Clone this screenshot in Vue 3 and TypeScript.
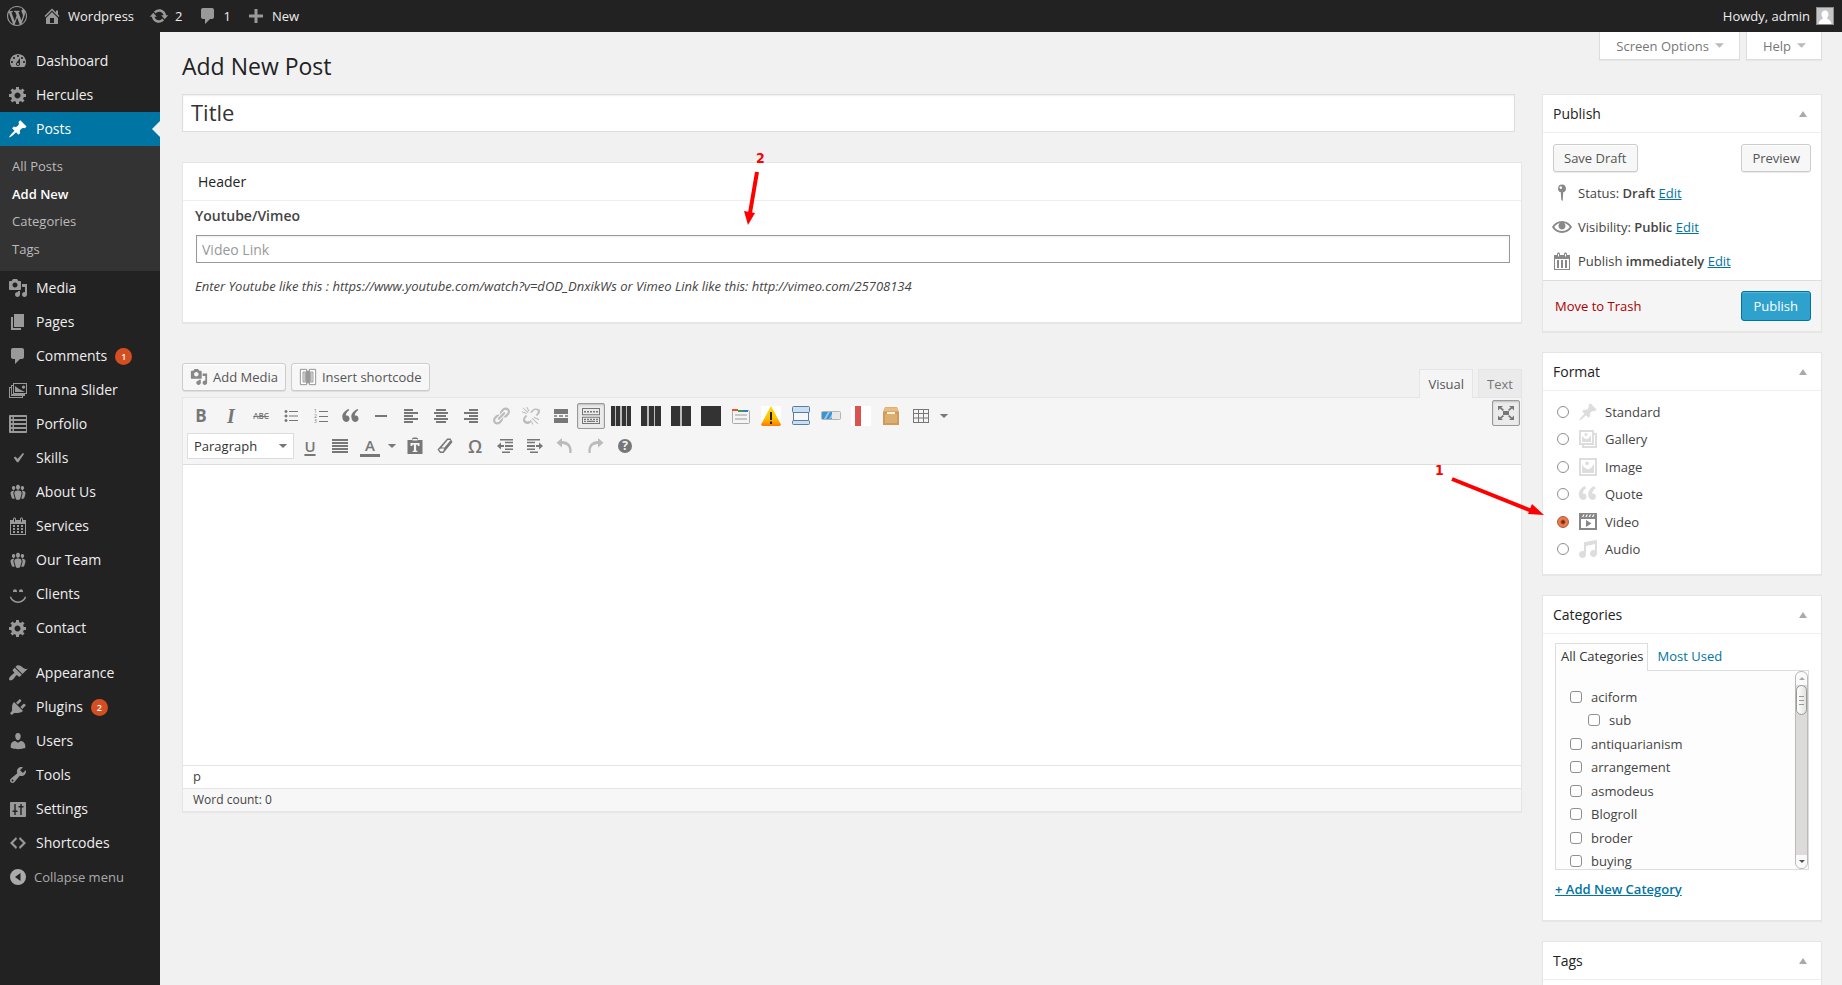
<script setup lang="ts">
import { h, ref } from 'vue'

const paths: Record<string, string> = {
  wordpress: 'M20 10c0-5.51-4.49-10-10-10C4.48 0 0 4.49 0 10c0 5.52 4.48 10 10 10 5.51 0 10-4.48 10-10zM7.78 15.37L4.37 6.22c.55-.02 1.17-.08 1.17-.08.5-.06.44-1.13-.06-1.11 0 0-1.45.11-2.37.11-.18 0-.37 0-.58-.01C4.12 2.69 6.87 1.11 10 1.11c2.33 0 4.45.87 6.05 2.34-.68-.11-1.65.39-1.65 1.58 0 .74.45 1.36.9 2.1.35.61.55 1.36.55 2.46 0 1.49-1.4 5-1.4 5l-3.03-8.37c.54-.02.82-.17.82-.17.5-.05.44-1.25-.06-1.22 0 0-1.44.12-2.38.12-.87 0-2.33-.12-2.33-.12-.5-.03-.56 1.2-.06 1.22l.92.08 1.26 3.41zM17.41 10c.24-.64.74-1.87.43-4.25.7 1.29 1.05 2.71 1.05 4.25 0 3.29-1.73 6.24-4.4 7.78.97-2.59 1.94-5.2 2.92-7.78zM6.1 18.09C3.12 16.65 1.11 13.53 1.11 10c0-1.3.23-2.48.72-3.59C3.25 10.3 4.67 14.2 6.1 18.09zm4.03-6.63l2.58 6.98c-.86.29-1.76.45-2.71.45-.79 0-1.57-.11-2.29-.33.81-2.38 1.62-4.74 2.42-7.1z',
  home: 'M16 8.5l1.53 1.53-1.06 1.06L10 4.6l-6.47 6.49-1.06-1.06L10 2.5l4 4v-2h2v4zm-6-2.46l6 5.99V18H4v-5.97zM12 17v-5H8v5h4z',
  update: 'M10.2 3.28c3.53 0 6.43 2.61 6.92 6h2.08l-3.5 4-3.5-4h2.32c-.45-1.97-2.21-3.45-4.32-3.45-1.45 0-2.73.71-3.54 1.78L4.95 5.66C6.23 4.2 8.11 3.28 10.2 3.28zm-.4 13.44c-3.52 0-6.43-2.61-6.92-6H.8l3.5-4c1.17 1.33 2.33 2.67 3.5 4H5.48c.45 1.97 2.21 3.45 4.32 3.45 1.45 0 2.73-.71 3.54-1.78l1.71 1.95c-1.28 1.46-3.15 2.38-5.25 2.38z',
  comment: 'M5 2h9c1.1 0 2 .9 2 2v7c0 1.1-.9 2-2 2h-2l-5 5v-5H5c-1.1 0-2-.9-2-2V4c0-1.1.9-2 2-2z',
  plus: 'M17 8.5v3h-5.5V17h-3v-5.5H3v-3h5.5V3h3v5.5z',
  dashboard: 'M3.76 16h12.48c1.1-1.37 1.76-3.11 1.76-5 0-4.42-3.58-8-8-8s-8 3.58-8 8c0 1.89.66 3.63 1.76 5zM10 4c.55 0 1 .45 1 1s-.45 1-1 1-1-.45-1-1 .45-1 1-1zM6 6c.55 0 1 .45 1 1s-.45 1-1 1-1-.45-1-1 .45-1 1-1zm8 0c.55 0 1 .45 1 1s-.45 1-1 1-1-.45-1-1 .45-1 1-1zm-5.37 5.55L12 7v6c0 1.1-.9 2-2 2s-2-.9-2-2c0-.57.24-1.08.63-1.45zM4 10c.55 0 1 .45 1 1s-.45 1-1 1-1-.45-1-1 .45-1 1-1zm12 0c.55 0 1 .45 1 1s-.45 1-1 1-1-.45-1-1 .45-1 1-1zm-5 3c0-.55-.45-1-1-1s-1 .45-1 1 .45 1 1 1 1-.45 1-1z',
  gear: 'M18 12h-2.18c-.17.7-.44 1.35-.81 1.93l1.54 1.54-2.1 2.1-1.54-1.54c-.58.36-1.23.63-1.91.79V19H8v-2.18c-.68-.16-1.33-.43-1.91-.79l-1.54 1.54-2.12-2.12 1.54-1.54c-.36-.58-.63-1.23-.79-1.91H1V9.03h2.17c.16-.7.44-1.35.8-1.94L2.43 5.55l2.1-2.1 1.54 1.54c.58-.37 1.24-.64 1.93-.81V2h3v2.18c.68.16 1.33.43 1.91.79l1.54-1.54 2.12 2.12-1.54 1.54c.36.59.64 1.24.8 1.94H18V12zm-8.5 1.5c1.66 0 3-1.34 3-3s-1.34-3-3-3-3 1.34-3 3 1.34 3 3 3z',
  pin: 'M10.44 3.02l1.82-1.82 6.36 6.35-1.83 1.82c-1.05-.68-2.48-.57-3.41.36l-.75.75c-.92.93-1.04 2.35-.35 3.41l-1.83 1.82-2.41-2.41-2.8 2.79c-.42.42-3.38 2.71-3.8 2.29s1.86-3.39 2.28-3.81l2.79-2.79L4.1 9.36l1.83-1.82c1.05.69 2.48.57 3.4-.36l.75-.75c.93-.92 1.05-2.35.36-3.41z',
  media: 'M13 11V4c0-.55-.45-1-1-1h-1.67L9 1H5L3.67 3H2c-.55 0-1 .45-1 1v7c0 .55.45 1 1 1h10c.55 0 1-.45 1-1zM7 4.5c1.38 0 2.5 1.12 2.5 2.5S8.38 9.5 7 9.5 4.5 8.38 4.5 7 5.62 4.5 7 4.5zM14 6h5v10.5c0 1.38-1.12 2.5-2.5 2.5S14 17.88 14 16.5s1.12-2.5 2.5-2.5c.17 0 .34.02.5.05V9h-3V6zm-4 8.05V13h2v3.5c0 1.38-1.12 2.5-2.5 2.5S7 17.88 7 16.5 8.12 14 9.5 14c.17 0 .34.02.5.05z',
  pages: 'M6 15V2h10v13H6zm-1 1h8v2H3V5h2v11z',
  slides: 'M5 3h14v11h-2v2h-2v2H1V7h2V5h2zM6 4v9h12V4zM4 6v8h12v1H3.9zM4 6v8.9h12V14H5V6zM2 8v9h12v-1H3V8zM7 12V6l4 3 2 1 4 2zM15.5 5.500a1.600 1.600 0 1 0 .01 0z',
  list: 'M2 1h16c.55 0 1 .45 1 1v16c0 .55-.45 1-1 1H2c-.55 0-1-.45-1-1V2c0-.55.45-1 1-1zM3 3v2h1.500V3zM6 3v2h12V3zM3 7v2h1.500V7zM6 7v2h12V7zM3 11v2h1.500v-2zM6 11v2h12v-2zM3 15v2h1.500v-2zM6 15v2h12v-2z',
  check: 'M14.83 4.89l1.34.94-5.81 8.38H9.02L5.78 9.67l1.34-1.25 2.57 2.4z',
  groups: 'M8.03 4.46c-.29 1.28.55 3.46 1.97 3.46 1.41 0 2.25-2.18 1.96-3.46-.22-.98-1.08-1.63-1.96-1.63-.89 0-1.74.65-1.97 1.63zm-4.13.9c-.25 1.08.47 2.93 1.67 2.93s1.92-1.85 1.67-2.93c-.19-.83-.92-1.39-1.67-1.39s-1.48.56-1.67 1.39zm8.86 0c-.25 1.08.47 2.93 1.66 2.93 1.2 0 1.92-1.85 1.67-2.93-.19-.83-.92-1.39-1.67-1.39-.74 0-1.47.56-1.66 1.39zm-.59 11.43l1.25-4.3C14.2 10 12.71 8.47 10 8.47c-2.72 0-4.21 1.53-3.44 4.02l1.26 4.3C8.05 17.51 9 18 10 18c.98 0 1.94-.49 2.17-1.21zm-6.1-7.63c-.49.67-.96 1.83-.42 3.59l1.12 3.79c-.34.2-.77.31-1.2.31-.85 0-1.65-.41-1.85-1.03l-1.07-3.65c-.65-2.11.61-3.4 2.92-3.4.27 0 .54.02.79.06-.1.1-.2.22-.29.33zm8.35-.39c2.31 0 3.58 1.29 2.92 3.4l-1.07 3.65c-.2.62-1 1.03-1.85 1.03-.43 0-.86-.11-1.2-.31l1.11-3.77c.55-1.78.08-2.94-.42-3.61-.08-.11-.18-.23-.28-.33.25-.04.51-.06.79-.06z',
  calendar: 'M15 4h3v15H2V4h3V3c0-.41.15-.76.44-1.06.29-.29.65-.44 1.06-.44s.77.15 1.06.44c.29.3.44.65.44 1.06v1h4V3c0-.41.15-.76.44-1.06.29-.29.65-.44 1.06-.44s.77.15 1.06.44c.29.3.44.65.44 1.06v1zM6 3v2.500c0 .14.05.26.15.36.09.09.21.14.35.14s.26-.05.35-.14c.1-.1.15-.22.15-.36V3c0-.14-.05-.26-.15-.35-.09-.1-.21-.15-.35-.15s-.26.05-.35.15c-.1.09-.15.21-.15.35zm7 0v2.500c0 .14.05.26.14.36.1.09.22.14.36.14s.26-.05.36-.14c.09-.1.14-.22.14-.36V3c0-.14-.05-.26-.14-.35-.1-.1-.22-.15-.36-.15s-.26.05-.36.15c-.09.09-.14.21-.14.35zm4 15V8H3v10h14zM7 9v2H5V9h2zm2 0h2v2H9V9zm4 2V9h2v2h-2zm-6 1v2H5v-2h2zm2 0h2v2H9v-2zm4 2v-2h2v2h-2zm-6 1v2H5v-2h2zm4 2H9v-2h2v2zm4 0h-2v-2h2v2z',
  schedule: 'M15 4h3v15H2V4h3V3c0-.41.15-.76.44-1.06.29-.29.65-.44 1.06-.44s.77.15 1.06.44c.29.3.44.65.44 1.06v1h4V3c0-.41.15-.76.44-1.06.29-.29.65-.44 1.06-.44s.77.15 1.06.44c.29.3.44.65.44 1.06v1zM6 3v2.500h1V3zM13 3v2.500h1V3zM17 18V8H3v10zM5 9h2v8H5zM9 9h2v8H9zM13 9h2v8h-2z',
  smiley: 'M7 5.2c1.1 0 2 .89 2 2 0 .37-.11.71-.28 1C8.72 8.2 8 8 7 8s-1.72.2-1.72.2c-.17-.29-.28-.63-.28-1 0-1.11.9-2 2-2zm6 0c1.11 0 2 .89 2 2 0 .37-.11.71-.28 1 0 0-.72-.2-1.72-.2s-1.72.2-1.72.2c-.17-.29-.28-.63-.28-1 0-1.11.89-2 2-2zm-3 13.700c3.720 0 7.030-2.360 8.230-5.880l-1.320-.46C15.900 15.520 13.120 17.500 10 17.500s-5.900-1.980-6.910-4.940l-1.320.46c1.200 3.520 4.510 5.880 8.230 5.880z',
  appearance: 'M14.48 11.06L7.41 3.99l1.5-1.5c.5-.56 2.3-.47 3.51.32 1.21.8 1.43 1.28 2.91 2.1 1.18.64 2.45 1.26 4.45.85zm-.71.71L6.7 4.7 4.93 6.47c-.39.39-.39 1.02 0 1.41l1.06 1.06c.39.39.39 1.03 0 1.42-.6.6-1.43 1.11-2.21 1.69-.35.26-.7.53-1.01.84C1.43 14.23.4 16.08 1.4 17.07c.99 1 2.84-.03 4.18-1.36.31-.31.58-.66.85-1.02.57-.78 1.08-1.61 1.69-2.21.39-.39 1.02-.39 1.41 0l1.06 1.06c.39.39 1.02.39 1.41 0z',
  plugins: 'M13.11 4.36L9.87 7.6 8 5.73l3.24-3.24c.35-.34 1.05-.2 1.56.32.52.51.66 1.21.31 1.55zm-8 1.77l.91-1.12 9.01 9.01-1.19.84c-.71.71-2.63 1.16-3.82 1.16H6.14L4.9 17.26c-.59.59-1.54.59-2.12 0-.59-.58-.59-1.53 0-2.12l1.24-1.24v-3.88c0-1.13.4-3.19 1.09-3.89zm7.26 3.97l3.24-3.24c.34-.35 1.04-.21 1.55.31.52.51.66 1.21.31 1.55l-3.24 3.25z',
  users: 'M10 9.25c-2.27 0-2.73-3.44-2.73-3.44C7 4.02 7.82 2 9.97 2c2.16 0 2.98 2.02 2.71 3.81 0 0-.41 3.44-2.68 3.44zm0 2.57L12.72 10c2.39 0 4.52 2.33 4.52 4.53v2.49s-3.65 1.13-7.24 1.13c-3.65 0-7.24-1.13-7.24-1.13v-2.49c0-2.25 1.94-4.48 4.47-4.48z',
  tools: 'M16.68 9.77c-1.34 1.34-3.3 1.67-4.95.99l-5.41 6.52c-.99.99-2.59.99-3.58 0s-.99-2.59 0-3.57l6.52-5.42c-.68-1.65-.35-3.61.99-4.95 1.28-1.28 3.12-1.62 4.72-1.06l-2.89 2.89 2.82 2.82 2.86-2.87c.53 1.58.18 3.39-1.08 4.65zM3.81 16.21c.4.39 1.04.39 1.43 0 .4-.4.4-1.04 0-1.43-.39-.4-1.03-.4-1.43 0-.39.39-.39 1.03 0 1.43z',
  settings: 'M3 3h14c.55 0 1 .45 1 1v13c0 .55-.45 1-1 1H3c-.55 0-1-.45-1-1V4c0-.55.45-1 1-1zM6.300 5v6.500H4.500V13H6.300v3h1.400v-3H9.500v-1.500H7.700V5zM12.300 5v2H10.500v1.500h1.800V16h1.400V8.500h1.800V7h-1.800V5z',
  code: 'M9 6l-4 4 4 4-1 2-6-6 6-6zm2 8l4-4-4-4 1-2 6 6-6 6z',
  collapse: 'M10 2a8 8 0 1 0 0 16a8 8 0 1 0 0-16zM12.500 6v8L7 10z',
  quote: 'M8.540 12.740c0-.870-.240-1.610-.720-2.220-.730-.920-2.140-1.030-2.960-.850-.340-1.930 1.300-4.390 3.420-5.450L7.650 2.940C4.450 4.460.810 6.960 1.350 11.370 1.690 14.160 2.800 16 5.080 16c1 0 1.830-.290 2.480-.880.660-.590.980-1.380.980-2.380zm9 0c0-.870-.240-1.610-.720-2.220-.730-.920-2.140-1.030-2.960-.850-.340-1.930 1.300-4.390 3.420-5.450l-.630-1.280c-3.200 1.520-6.840 4.020-6.300 8.430.340 2.790 1.450 4.630 3.730 4.630 1 0 1.830-.290 2.480-.880.660-.590.980-1.380.980-2.380z',
  bigquote: 'M8.540 12.740c0-.870-.240-1.610-.720-2.220-.730-.920-2.140-1.030-2.960-.850-.340-1.930 1.300-4.390 3.420-5.450L6.650 1.940C3.450 3.460.310 6.960.850 11.370 1.190 14.160 2.800 16 5.080 16c1 0 1.830-.290 2.480-.880.660-.590.980-1.380.980-2.380zm9.430 0c0-.870-.240-1.610-.720-2.220-.730-.920-2.140-1.030-2.960-.850-.340-1.930 1.300-4.390 3.420-5.450l-1.630-2.280c-3.200 1.520-6.340 5.020-5.800 9.430.340 2.790 1.950 4.630 4.230 4.630 1 0 1.830-.290 2.480-.880.660-.590.980-1.380.980-2.380z',
  audio: 'M6.99 3.08l11.02-2c.55-.08.99.45.99 1V14.5c0 1.94-1.57 3.5-3.5 3.5S12 16.44 12 14.5c0-1.93 1.57-3.5 3.5-3.5.54 0 1.04.14 1.5.35V5.08l-9 2V16c-.24 1.7-1.74 3-3.5 3C2.57 19 1 17.44 1 15.5 1 13.57 2.57 12 4.5 12c.54 0 1.04.14 1.5.35V4.08c0-.55.44-.91.99-1z',
  image: 'M1 1h18v18H1zM3 3v14h14V3zM4 16V8l3 3 3 1.500L13 11l3-4v9zM9 4.500a1.900 1.900 0 1 0 .01 0z',
  gallery: 'M1 1h15v3h3v15H4v-3H1zM3 3v11h11V3zM4 13V7l2.500 2.500 3 .8L13 6.500V13zM8 4a1.500 1.500 0 1 0 .01 0zM16 6v10H6v1h11V6z',
  video: 'M1 1h18v17H1zM3 7v9h14V7zM8 8l5.500 3.500L8 15zM5.300 2.500L4 5h1.300L6.600 2.500zM8.600 2.500L7.300 5h1.300L9.900 2.500zM11.900 2.500L10.600 5h1.300l1.300-2.500zM15.200 2.500L13.900 5h1.300l1.300-2.500z',
  eye: 'M19.7 9.4C17.7 6 14 3.9 10 3.9S2.3 6 .3 9.4L0 10l.3.6c2 3.4 5.7 5.5 9.7 5.5s7.7-2.1 9.7-5.5l.3-.6-.3-.6zM10 14.1c-3.1 0-6-1.6-7.7-4.1C3.6 8 5.7 6.6 8 6.1c-.9.6-1.500 1.700-1.500 2.900 0 1.900 1.600 3.500 3.500 3.500s3.500-1.600 3.500-3.500c0-1.200-.6-2.300-1.500-2.900 2.300.5 4.400 1.900 5.700 3.900-1.700 2.500-4.600 4.100-7.700 4.100z',
  status: 'M10 1.500a4 4 0 0 1 1.200 7.800L10.700 18 9.300 17 8.800 9.300A4 4 0 0 1 10 1.500zM8.800 3.300a1.300 1.300 0 1 0 .01 0z',
  bullets: 'M5 4a1.500 1.500 0 1 0 .01 0zM5 8.500a1.500 1.500 0 1 0 .01 0zM5 13a1.500 1.500 0 1 0 .01 0zM8 5h9v1H8zM8 9.500h9v1H8zM8 14h9v1H8z',
  rule: 'M4 9h12v2H4z',
  left: 'M3 3h9v2H3zM3 6h14v2H3zM3 9h9v2H3zM3 12h14v2H3zM3 15h9v2H3z',
  center: 'M5 3h10v2H5zM3 6h14v2H3zM5 9h10v2H5zM3 12h14v2H3zM5 15h10v2H5z',
  right: 'M8 3h9v2H8zM3 6h14v2H3zM8 9h9v2H8zM3 12h14v2H3zM8 15h9v2H8z',
  justify: 'M2 3h16v2H2zM2 6h16v2H2zM2 9h16v2H2zM2 12h16v2H2zM2 15h16v2H2z',
  link: 'M17.74 2.76c1.68 1.69 1.68 4.41 0 6.1l-1.53 1.52c-1.12 1.12-2.7 1.47-4.14 1.09l2.62-2.61.76-.77.76-.76c.84-.84.84-2.2 0-3.04-.84-.85-2.2-.85-3.04 0l-.77.76-3.38 3.38c-.37-1.44-.02-3.02 1.1-4.14l1.52-1.53c1.69-1.68 4.42-1.68 6.1 0zM8.59 13.43l5.34-5.34c.42-.42.42-1.1 0-1.52-.44-.43-1.13-.39-1.53 0l-5.33 5.34c-.42.42-.42 1.1 0 1.52.44.43 1.13.39 1.52 0zm-.76 2.29l4.14-4.15c.38 1.44.03 3.02-1.09 4.14l-1.52 1.53c-1.69 1.68-4.41 1.68-6.1 0-1.68-1.68-1.68-4.42 0-6.1l1.53-1.52c1.12-1.12 2.7-1.47 4.14-1.1l-4.14 4.15c-.85.84-.85 2.2 0 3.05.84.84 2.2.84 3.04 0z',
  unlink: 'M17.740 2.260c1.680 1.690 1.680 4.410 0 6.100l-1.530 1.520-1.500-.7 1.500-1.850c.840-.840.840-2.200 0-3.040-.840-.850-2.200-.850-3.040 0l-2.700 2.700-1.400-.7 2.570-2.500c1.690-1.680 4.420-1.680 6.100 0zM7.830 15.720l2.100-2 1.400 1-1.970 2.020c-1.690 1.680-4.410 1.680-6.100 0-1.680-1.680-1.680-4.420 0-6.100l1.530-1.520 1.500.8-1.550 1.800c-.850.840-.850 2.200 0 3.050.840.840 2.200.840 3.040 0zM2 1.500l5.500 4.700-.8.800L1.500 2zM6.200 1l2.300 4-1 .5L5.200 1zM1 5.300l4.800 1.600-.4 1L1 6.300zM11.500 12l5.800 5.500-.6.700-5.800-5.500zM10.300 13.500l2 5h-1.200l-1.600-4.700zM13 10.800l5 2.300v1.200l-5.300-2.500z',
  more: 'M3 3h14v5H3zM3 9.200h3v1.600H3zM8 9.200h4v1.600H8zM14 9.200h3v1.600h-3zM3 12h14v5H3z',
  keyboard: 'M1 2h18v7.300H1zM2 3v5.300h16V3zM3 5h2v1.500H3zM6 5h2v1.500H6zM9 5h2v1.500H9zM12 5h2v1.500h-2zM15 5h2v1.500h-2zM1 10.700h18V18H1zM2 11.700V17h16v-5.300zM3 12.700h2V14H3zM6 12.700h2V14H6zM9 12.700h2V14H9zM12 12.700h2V14h-2zM15 12.700h2V14h-2zM3 14.700h2V16H3zM6 14.700h8V16H6zM15 14.700h2V16h-2z',
  paste: 'M7 4V2.500L8.500 1.500h3L13 2.500V4h4.500v14h-15V4zM7.500 3v1.500h5V3zM5.500 7v3h1.800V8.800h1.600v6H7.700V16h4.600v-1.200h-1.200v-6h1.600V10h1.800V7z',
  eraser: 'M12.200 2.500h3.300L17.500 6 8.500 17H5L2.500 13.500zM12.800 4L6.500 11.500h3L15.500 4.300 15.200 4zM6 12.600L4 13.600 5.700 15.600H8L9.300 12.600z',
  outdent: 'M5 3h13v1.500H5zM10 5.800h8v1.500h-8zM10 9h8v2h-8zM10 12.500h8V14h-8zM7 15.500h8V17H7zM2 10l4-3.500v2.500h3v2H6v2.500z',
  indent: 'M2 3h13v1.500H2zM2 5.800h8v1.500H2zM2 9h8v2H2zM2 12.500h8V14H2zM5 15.500h8V17H5zM18 10l-4-3.500v2.500h-3v2h3v2.500z',
  undo: 'M7 2v3c6 0 10.500 4 9.500 12h-2.300C15 11 12 8.200 7 8v3.500L1.500 6.800z',
  redo: 'M13 2v3C7 5 2.500 9 3.500 17h2.300C5 11 8 8.200 13 8v3.500l5.500-4.700z',
  table: 'M2 3h16v14H2zM3 4v3h4V4zM8 4v3h4V4zM13 4v3h4V4zM3 8v3.500h4V8zM8 8v3.500h4V8zM13 8v3.500h4V8zM3 12.500V16h4v-3.500zM8 12.500V16h4v-3.500zM13 12.500V16h4v-3.500z',
  expand: 'M7 8h6v4H7zM2 3h5L5.300 4.500 8 6.800 6.800 8 4 5.600 2 7.500zM18 3v4.500L16 5.600 13.200 8 12 6.800l2.700-2.300L13 3zM2 17v-4.500l2 1.900L6.800 12 8 13.200l-2.700 2.300L7 17zM18 17h-5l1.700-1.500L12 13.200l1.200-1.200 2.800 2.400 2-1.900z',
  down: 'M4 7h12l-6 6z',
}

const Icon = (props: { name: string }) =>
  h('svg', { class: 'icon', viewBox: '0 0 20 20', 'aria-hidden': 'true' }, [
    h('path', { d: paths[props.name], 'fill-rule': 'evenodd' }),
  ])
Icon.props = ['name']

interface MenuItem { label: string; icon: string; count?: number; sub?: string[]; gap?: boolean }
const menu: MenuItem[] = [
  { label: 'Dashboard', icon: 'dashboard' },
  { label: 'Hercules', icon: 'gear' },
  { label: 'Posts', icon: 'pin', sub: ['All Posts', 'Add New', 'Categories', 'Tags'] },
  { label: 'Media', icon: 'media' },
  { label: 'Pages', icon: 'pages' },
  { label: 'Comments', icon: 'comment', count: 1 },
  { label: 'Tunna Slider', icon: 'slides' },
  { label: 'Porfolio', icon: 'list' },
  { label: 'Skills', icon: 'check' },
  { label: 'About Us', icon: 'groups' },
  { label: 'Services', icon: 'calendar' },
  { label: 'Our Team', icon: 'groups' },
  { label: 'Clients', icon: 'smiley' },
  { label: 'Contact', icon: 'gear' },
  { label: 'Appearance', icon: 'appearance', gap: true },
  { label: 'Plugins', icon: 'plugins', count: 2 },
  { label: 'Users', icon: 'users' },
  { label: 'Tools', icon: 'tools' },
  { label: 'Settings', icon: 'settings' },
  { label: 'Shortcodes', icon: 'code' },
]

const formats = [
  { label: 'Standard', icon: 'pin' },
  { label: 'Gallery', icon: 'gallery' },
  { label: 'Image', icon: 'image' },
  { label: 'Quote', icon: 'bigquote' },
  { label: 'Video', icon: 'video' },
  { label: 'Audio', icon: 'audio' },
]
const format = ref('Video')

const categories = [
  { label: 'aciform' }, { label: 'sub', child: true }, { label: 'antiquarianism' }, { label: 'arrangement' },
  { label: 'asmodeus' }, { label: 'Blogroll' }, { label: 'broder' }, { label: 'buying' },
]
const chosen = ref<string[]>([])
const title = ref('Title')
const video = ref('')
const body = ref('')

const firstRow = [
  { icon: 'quote', label: 'Blockquote' }, { icon: 'rule', label: 'Horizontal line' },
  { icon: 'left', label: 'Align left' }, { icon: 'center', label: 'Align center' }, { icon: 'right', label: 'Align right' },
  { icon: 'link', label: 'Insert link', off: true }, { icon: 'unlink', label: 'Remove link', off: true },
  { icon: 'more', label: 'Insert Read More tag' }, { icon: 'keyboard', label: 'Toolbar Toggle', on: true },
]
const columns = [
  { label: 'Four columns', bars: [[0, 4], [5, 4], [11, 4], [16, 4]] },
  { label: 'Three columns', bars: [[0, 6], [8, 5], [14, 6]] },
  { label: 'Two columns', bars: [[0, 9], [11, 9]] },
  { label: 'One column', bars: [[0, 20]] },
]
</script>

<template>
  <div class="app">
    <header class="adminbar">
      <a href="#" aria-label="About WordPress"><Icon name="wordpress" /></a>
      <a href="#"><Icon name="home" />Wordpress</a>
      <a href="#"><Icon name="update" />2</a>
      <a href="#"><Icon name="comment" />1</a>
      <a href="#"><Icon name="plus" />New</a>
      <a href="#" class="account">Howdy, admin
        <svg class="avatar" viewBox="0 0 18 18" aria-hidden="true">
          <rect width="18" height="18" fill="#8c8c8c" /><rect x="1" y="1" width="16" height="16" fill="#c5c5c5" />
          <path d="M9 3.500c2.500 0 3.500 1.800 3.500 3.800 0 1.700-.8 3-1.600 3.700.6 1.500 4.100 1.500 4.600 6h-13c.5-4.500 4-4.500 4.600-6-.8-.7-1.600-2-1.600-3.700 0-2 1-3.800 3.500-3.800z" fill="#fff" />
        </svg>
      </a>
    </header>

    <div class="shell">
      <nav class="sidebar" aria-label="Main menu">
        <ul>
          <li v-for="item in menu" :key="item.label" :class="{ current: item.sub, gap: item.gap }">
            <a href="#" class="top"><Icon :name="item.icon" /><span>{{ item.label }}</span>
              <b v-if="item.count" class="count">{{ item.count }}</b></a>
            <ul v-if="item.sub" class="sub">
              <li v-for="s in item.sub" :key="s"><a href="#" :class="{ here: s === 'Add New' }">{{ s }}</a></li>
            </ul>
          </li>
        </ul>
        <button type="button" class="collapse"><Icon name="collapse" />Collapse menu</button>
      </nav>

      <main>
        <div class="heading">
          <h1>Add New Post</h1>
          <button type="button" class="meta-tab">Screen Options<Icon name="down" /></button>
          <button type="button" class="meta-tab">Help<Icon name="down" /></button>
        </div>

        <div class="columns">
          <div class="primary">
            <input v-model="title" class="title" type="text" aria-label="Title">

            <section class="box header-box">
              <h2>Header</h2>
              <label for="video">Youtube/Vimeo</label>
              <input id="video" v-model="video" type="text" placeholder="Video Link">
              <p>Enter Youtube like this : https://www.youtube.com/watch?v=dOD_DnxikWs or Vimeo Link like this: http://vimeo.com/25708134</p>
              <div class="note note-two">
                <span>2</span>
                <svg viewBox="0 0 20 60" aria-hidden="true"><path d="M14 3L7 44" stroke="#f00" stroke-width="4" fill="none" /><path d="M1 42l11 2-7 12z" fill="#f00" /></svg>
              </div>
            </section>

            <div class="tools">
              <button type="button" class="button"><Icon name="media" />Add Media</button>
              <button type="button" class="button">
                <svg class="icon" viewBox="0 0 20 20" aria-hidden="true">
                  <g fill="#fff" stroke="#8a8a8a"><path d="M8.500 1.500h-7v17h7v-3h-4v-11h4zM11.500 1.500h7v17h-7v-3h4v-11h-4z" /></g>
                  <rect x="6" y="5" width="8" height="10" fill="#aaa" /><rect x="8" y="3" width="4" height="14" fill="#999" />
                </svg>Insert shortcode</button>
              <span class="tabs">
                <button type="button" class="tab active">Visual</button>
                <button type="button" class="tab">Text</button>
              </span>
            </div>

            <section class="editor">
              <div class="toolbar">
                <div class="rows">
                  <div class="row">
                    <button type="button" class="glyph bold">B</button>
                    <button type="button" class="glyph italic">I</button>
                    <button type="button" class="glyph strike">ABC</button>
                    <button type="button" aria-label="Bulleted list"><Icon name="bullets" /></button>
                    <button type="button" aria-label="Numbered list">
                      <svg class="icon" viewBox="0 0 20 20" aria-hidden="true">
                        <g class="digits"><text x="3" y="7">1</text><text x="3" y="12">2</text><text x="3" y="17">3</text></g>
                        <path d="M8 5h9v1H8zM8 10h9v1H8zM8 15h9v1H8z" />
                      </svg>
                    </button>
                    <button v-for="b in firstRow" :key="b.icon" type="button" :aria-label="b.label" :class="{ off: b.off, on: b.on }"><Icon :name="b.icon" /></button>
                    <button v-for="c in columns" :key="c.label" type="button" :aria-label="c.label">
                      <svg class="icon" viewBox="0 0 20 20" aria-hidden="true">
                        <rect width="20" height="20" fill="#bbb" />
                        <rect v-for="b in c.bars" :key="b[0]" :x="b[0]" :width="b[1]" height="20" fill="#333" />
                      </svg>
                    </button>
                    <button type="button" aria-label="Tabs">
                      <svg class="icon" viewBox="0 0 20 20" aria-hidden="true">
                        <rect x="1.500" y="4.500" width="17" height="13" rx="1" fill="#f4f4f4" stroke="#aaa" />
                        <rect x="1" y="3" width="6" height="2" fill="#f0512d" /><rect x="7" y="4" width="5" height="2" fill="#3b9d46" /><rect x="12" y="4" width="5" height="2" fill="#3478c8" />
                        <path d="M4 9h12M4 13h12" stroke="#999" />
                      </svg>
                    </button>
                    <button type="button" aria-label="Alert">
                      <svg class="icon" viewBox="0 0 20 20" aria-hidden="true">
                        <defs><linearGradient id="warn" x2="0" y2="1"><stop offset="0" stop-color="#ffd800" /><stop offset=".6" stop-color="#ffc400" /><stop offset="1" stop-color="#ff7a00" /></linearGradient></defs>
                        <rect width="20" height="20" fill="#fff" /><path d="M10 0L20 18.500 19 20H1L0 18.500z" fill="url(#warn)" /><path d="M9 6h2v8H9zM9 15.500h2V18H9z" fill="#222" />
                      </svg>
                    </button>
                    <button type="button" aria-label="Accordion">
                      <svg class="icon" viewBox="0 0 20 20" aria-hidden="true">
                        <g stroke="#5d7c9d"><rect x="1.500" y=".5" width="17" height="6" rx="1" fill="#c9dff2" /><rect x="2.500" y="6.500" width="15" height="8" fill="#f5f8fb" /><rect x="1.500" y="14.500" width="17" height="4" rx="1" fill="#c9dff2" /></g>
                      </svg>
                    </button>
                    <button type="button" aria-label="Progress bar">
                      <svg class="icon" viewBox="0 0 20 20" aria-hidden="true">
                        <rect x=".5" y="5.500" width="19" height="8" rx="1" fill="#e8e8e8" stroke="#b5b5b5" /><rect x="1" y="6" width="10" height="7" fill="#3f94d0" /><path d="M3 13l4-7h2l-4 7zM8 13l3-5v4z" fill="#9acbed" />
                      </svg>
                    </button>
                    <button type="button" aria-label="Divider">
                      <svg class="icon" viewBox="0 0 20 20" aria-hidden="true"><rect width="20" height="20" fill="#fff" /><rect x="4" width="6" height="20" fill="#d9534f" /></svg>
                    </button>
                    <button type="button" aria-label="Box">
                      <svg class="icon" viewBox="0 0 20 20" aria-hidden="true">
                        <path d="M4 1h12l2 5v13H2V6z" fill="#dba967" /><path d="M2 6h16v13H2z" fill="#d09a58" /><path d="M4 1.500h12L17 5H3z" fill="#e6bd84" /><rect x="4" y="8" width="12" height="9" fill="#dcae70" /><rect x="6" y="6" width="8" height="2" fill="#fff3d8" />
                      </svg>
                    </button>
                    <span class="split">
                      <button type="button" aria-label="Table"><Icon name="table" /></button>
                      <button type="button" class="caret" aria-label="Table options"><Icon name="down" /></button>
                    </span>
                  </div>
                  <div class="row">
                    <span class="picker">
                      <select aria-label="Paragraph style"><option>Paragraph</option><option>Heading 1</option></select>
                      <Icon name="down" />
                    </span>
                    <button type="button" class="glyph under">U</button>
                    <button type="button" aria-label="Justify"><Icon name="justify" /></button>
                    <span class="split">
                      <button type="button" class="glyph colour"><span>A</span></button>
                      <button type="button" class="caret" aria-label="Text color options"><Icon name="down" /></button>
                    </span>
                    <button type="button" aria-label="Paste as text"><Icon name="paste" /></button>
                    <button type="button" aria-label="Clear formatting"><Icon name="eraser" /></button>
                    <button type="button" class="glyph omega">Ω</button>
                    <button type="button" aria-label="Decrease indent"><Icon name="outdent" /></button>
                    <button type="button" aria-label="Increase indent"><Icon name="indent" /></button>
                    <button type="button" class="off" aria-label="Undo"><Icon name="undo" /></button>
                    <button type="button" class="off" aria-label="Redo"><Icon name="redo" /></button>
                    <button type="button" class="help"><span>?</span></button>
                  </div>
                </div>
                <button type="button" class="on expand" aria-label="Distraction Free Writing"><Icon name="expand" /></button>
              </div>
              <textarea v-model="body" aria-label="Post content"></textarea>
              <div class="path">p</div>
              <div class="words">Word count: 0</div>
            </section>
          </div>

          <aside>
            <section class="box">
              <h2>Publish<button type="button" class="toggle" aria-label="Toggle Publish"></button></h2>
              <div class="publish">
                <div class="pair"><button type="button" class="button">Save Draft</button><button type="button" class="button">Preview</button></div>
                <div class="fact"><Icon name="status" /><span>Status: <b>Draft</b> <a href="#">Edit</a></span></div>
                <div class="fact"><Icon name="eye" /><span>Visibility: <b>Public</b> <a href="#">Edit</a></span></div>
                <div class="fact"><Icon name="schedule" /><span>Publish <b>immediately</b> <a href="#">Edit</a></span></div>
              </div>
              <div class="actions"><a href="#">Move to Trash</a><button type="button" class="submit">Publish</button></div>
            </section>

            <section class="box format-box">
              <h2>Format<button type="button" class="toggle" aria-label="Toggle Format"></button></h2>
              <div class="formats">
                <label v-for="f in formats" :key="f.label" :class="{ picked: f.label === format }">
                  <input v-model="format" type="radio" name="format" :value="f.label"><Icon :name="f.icon" />{{ f.label }}
                </label>
              </div>
              <div class="note note-one">
                <span>1</span>
                <svg viewBox="0 0 96 44" aria-hidden="true"><path d="M2 4L82 36" stroke="#f00" stroke-width="4" fill="none" /><path d="M82 29l12 11-16-1z" fill="#f00" /></svg>
              </div>
            </section>

            <section class="box">
              <h2>Categories<button type="button" class="toggle" aria-label="Toggle Categories"></button></h2>
              <div class="cats">
                <div class="cat-tabs"><a href="#" class="active">All Categories</a><a href="#">Most Used</a></div>
                <div class="panel">
                  <div class="cat-list">
                    <label v-for="c in categories" :key="c.label" :class="{ child: c.child }"><input v-model="chosen" type="checkbox" :value="c.label">{{ c.label }}</label>
                  </div>
                  <div class="scroll" aria-hidden="true"><i class="up"></i><i class="thumb"></i><i class="groove"></i><i class="dn"></i></div>
                </div>
                <a href="#" class="add">+ Add New Category</a>
              </div>
            </section>

            <section class="box tags">
              <h2>Tags<button type="button" class="toggle" aria-label="Toggle Tags"></button></h2>
            </section>
          </aside>
        </div>
      </main>
    </div>
  </div>
</template>

<style>
body { margin: 0; background: #f1f1f1; }
</style>

<style scoped>
* { box-sizing: border-box; }
.app { height: 100vh; overflow: hidden; display: flex; flex-direction: column; background: #f1f1f1; color: #444; font: 13px/20px "Open Sans", sans-serif; }
button, input, select, textarea { font: inherit; color: inherit; margin: 0; outline: 0; }
button { padding: 0; border: 0; background: none; cursor: pointer; }
ul { list-style: none; margin: 0; padding: 0; }
a { color: #0074a2; }
b { font-weight: 600; }
.icon { width: 20px; height: 20px; flex: none; fill: currentColor; display: block; }

.adminbar { display: flex; align-items: center; gap: 15px; height: 32px; flex: none; padding: 0 8px 0 7px; background: #222; }
.adminbar a { display: flex; align-items: center; gap: 6px; color: #eee; text-decoration: none; }
.adminbar .icon { color: #999; }
.adminbar .account { margin-left: auto; }
.avatar { width: 18px; height: 18px; }

.shell { display: flex; flex: 1; min-height: 0; }
.sidebar { width: 160px; flex: none; padding-top: 12px; background: #222; }
.top { display: flex; align-items: center; gap: 8px; height: 34px; padding-left: 8px; color: #eee; font-size: 14px; text-decoration: none; }
.top .icon { color: #999; }
.gap { margin-top: 11px; }
.current .top { position: relative; background: #0074a2; color: #fff; }
.current .top .icon { color: #fff; }
.current .top::after { content: ""; position: absolute; right: 0; top: 9px; border: 8px solid transparent; border-left: 0; border-right-color: #f1f1f1; }
.count { display: grid; place-items: center; width: 17px; height: 17px; border-radius: 50%; background: #d54e21; color: #fff; font-size: 9px; line-height: 17px; }
.sub { display: grid; grid-template-rows: repeat(4, 1fr); height: 125px; padding: 6px 0 8px; background: #333; }
.sub a { display: flex; align-items: center; height: 100%; padding-left: 12px; color: #bbb; text-decoration: none; }
.sub .here { color: #fff; font-weight: 600; }
.collapse { display: flex; align-items: center; gap: 6px; height: 34px; padding-left: 8px; color: #aaa; }

main { flex: 1; min-width: 0; padding: 0 20px 0 22px; }
.heading { display: flex; align-items: flex-start; gap: 6px; height: 62px; }
h1 { flex: 1; margin: 0; padding-top: 20px; color: #222; font-size: 23px; font-weight: 400; line-height: 28px; }
.meta-tab { display: flex; align-items: center; gap: 3px; height: 28px; padding: 0 12px 0 16px; border: 1px solid #ddd; border-top: 0; background: #fff; color: #777; box-shadow: 0 1px 1px rgba(0, 0, 0, .04); }
.meta-tab .icon { color: #bbb; width: 15px; height: 15px; }
.columns { display: flex; align-items: flex-start; gap: 20px; }
.primary { flex: 1; min-width: 0; }
aside { width: 280px; flex: none; display: flex; flex-direction: column; gap: 20px; }

.title { display: block; width: calc(100% - 7px); height: 38px; padding: 2px 8px 4px; border: 1px solid #ddd; background: #fff; color: #333; font-size: 22px; box-shadow: inset 0 1px 2px rgba(0, 0, 0, .07); }
.box { position: relative; border: 1px solid #e5e5e5; background: #fff; box-shadow: 0 1px 1px rgba(0, 0, 0, .04); }
h2 { display: flex; align-items: center; justify-content: space-between; height: 38px; margin: 0; padding: 0 10px; border-bottom: 1px solid #eee; color: #222; font-size: 14px; font-weight: 400; line-height: 20px; }
.toggle { width: 16px; height: 20px; display: grid; place-items: center; }
.toggle::before { content: ""; border: 4px solid transparent; border-top: 0; border-bottom: 6px solid #aaa; }

.header-box { margin-top: 30px; padding-bottom: 26px; }
.header-box h2 { padding-left: 15px; }
.header-box label { display: block; padding: 5px 12px 9px; font-size: 14px; font-weight: 600; }
.header-box input { display: block; width: calc(100% - 24px); height: 28px; margin-left: 13px; padding: 0 5px; border: 1px solid #999; background: #fff; font-size: 14px; box-shadow: inset 0 1px 2px rgba(0, 0, 0, .07); }
.header-box input::placeholder { color: #999; opacity: 1; }
.header-box p { margin: 13px 12px 0; font-style: italic; }

.note { position: absolute; color: #f00; font: bold 14px/14px "DejaVu Sans Condensed", "DejaVu Sans", sans-serif; pointer-events: none; }
.note span, .note svg { display: block; }
.note-two { left: 560px; top: -12px; }
.note-two span { padding-left: 13px; }
.note-two svg { width: 20px; height: 60px; margin-top: 4px; }
.note-one { left: -108px; top: 110px; }
.note-one svg { width: 96px; height: 44px; margin: -2px 0 0 15px; }

.tools { display: flex; align-items: flex-start; gap: 5px; height: 34px; margin-top: 40px; }
.button { display: flex; align-items: center; gap: 5px; height: 28px; padding: 0 10px; border: 1px solid #ccc; border-radius: 3px; background: #f7f7f7; color: #555; box-shadow: inset 0 1px 0 #fff, 0 1px 0 rgba(0, 0, 0, .08); }
.tools .button { padding: 0 7px; }
.tools .icon { color: #888; width: 18px; height: 18px; }
.tabs { display: flex; gap: 5px; margin: 6px 0 0 auto; }
.tab { position: relative; height: 28px; padding: 0 8px; border: 1px solid #e5e5e5; border-bottom: 0; background: #ebebeb; color: #777; }
.tab.active { height: 29px; background: #f5f5f5; color: #555; z-index: 1; }

.editor { border: 1px solid #e5e5e5; background: #fff; box-shadow: 0 1px 1px rgba(0, 0, 0, .04); }
.toolbar { display: flex; border-bottom: 1px solid #ddd; background: #f5f5f5; color: #777; }
.rows { flex: 1; min-width: 0; display: grid; gap: 4px; padding: 5px 4px; }
.row { display: flex; gap: 2px; height: 26px; }
.row button, .expand { display: grid; place-items: center; width: 28px; height: 26px; flex: none; }
.toolbar .on { border: 1px solid #999; border-radius: 2px; background: #ebebeb; box-shadow: inset 0 1px 2px rgba(0, 0, 0, .2); }
.toolbar .off { color: #bbb; }
.expand { margin: 2px 1px; }
.split { display: flex; }
.row .caret { width: 17px; }
.row .colour + .caret { width: 15px; }
.caret .icon { width: 14px; height: 14px; }
.row .glyph { font-weight: 700; font-size: 17px; line-height: 20px; }
.row .italic { font: italic bold 20px/20px "Liberation Serif", serif; }
.row .strike { font-size: 8px; font-weight: 600; text-decoration: line-through; }
.row .under { font-size: 15px; font-weight: 600; text-decoration: underline; text-underline-offset: 2px; text-decoration-thickness: 2px; }
.row .colour { font-size: 15px; font-weight: 600; }
.colour span { width: 20px; height: 21px; border-bottom: 3px solid #777; line-height: 18px; }
.row .omega { font-size: 18px; font-weight: 600; }
.digits { font: 5px "Open Sans", sans-serif; }
.help span { display: grid; place-items: center; width: 14px; height: 14px; border-radius: 50%; background: #777; color: #f5f5f5; font-size: 12px; font-weight: 700; line-height: 14px; }
.picker { position: relative; width: 107px; }
.picker select { width: 100%; height: 26px; padding: 0 6px; border: 1px solid #ddd; border-radius: 0; background: #fff; color: #333; appearance: none; }
.picker .icon { position: absolute; right: 4px; top: 6px; width: 14px; height: 14px; pointer-events: none; }
textarea { display: block; width: 100%; height: 300px; border: 0; padding: 10px; resize: none; background: #fff; }
.path, .words { height: 23px; padding: 0 10px; border-top: 1px solid #e5e5e5; line-height: 21px; }
.words { background: #f7f7f7; font-size: 12px; }

.publish { padding: 11px 10px 2px; }
.pair { display: flex; justify-content: space-between; margin-bottom: 4px; }
.fact { display: flex; align-items: center; gap: 6px; height: 34px; margin-left: -1px; }
.fact .icon { color: #888; }
.actions { display: flex; align-items: center; justify-content: space-between; padding: 10px 10px 10px 12px; border-top: 1px solid #ddd; background: #f5f5f5; }
.actions a { color: #a00; text-decoration: none; }
.submit { height: 30px; padding: 0 12px; border: 1px solid #0074a2; border-radius: 3px; background: #2ea2cc; color: #fff; box-shadow: inset 0 1px 0 rgba(120, 200, 230, .5); }

.formats { display: grid; grid-template-rows: repeat(6, 1fr); height: 183px; padding: 7px 14px 11px; }
.formats label { display: flex; align-items: center; }
.formats .icon { margin: 0 7px 0 9px; color: #ddd; }
.formats .picked .icon { color: #888; }
input[type="radio"], input[type="checkbox"] { appearance: none; width: 12px; height: 12px; flex: none; border: 1px solid #8f8f8f; background: #fff; }
input[type="radio"] { border-radius: 50%; }
input[type="checkbox"] { border-radius: 3px; }
input[type="radio"]:checked { border-color: #a8583a; background: radial-gradient(circle, #6b2c16 0 1px, #f0794c 3px); }

.cats { display: flex; flex-direction: column; align-items: flex-start; padding: 9px 12px 22px; }
.cat-tabs { display: flex; }
.cat-tabs a { height: 27px; padding: 2px 4px 0 5px; border: 1px solid transparent; border-bottom: 0; text-decoration: none; }
.cat-tabs .active { position: relative; height: 28px; margin: 0 3px -1px 0; border-color: #ddd; background: #fdfdfd; color: #333; }
.panel { display: flex; width: 100%; height: 200px; overflow: hidden; border: 1px solid #ddd; background: #fdfdfd; }
.cat-list { flex: 1; display: grid; grid-template-rows: repeat(8, 1fr); height: 188px; margin-top: 14px; padding-left: 14px; }
.cat-list label { display: flex; align-items: center; gap: 9px; }
.cat-list .child { padding-left: 18px; }
.scroll { display: flex; flex-direction: column; width: 13px; border: 1px solid #bbb; border-radius: 6px; background: #dcdbd9; }
.scroll .up, .scroll .dn { display: grid; place-items: center; height: 13px; background: #fafafa; }
.scroll .up { border-radius: 6px 6px 0 0; }
.scroll .dn { border-radius: 0 0 6px 6px; }
.up::before, .dn::before { content: ""; border: 3px solid transparent; }
.up::before { border-top: 0; border-bottom-color: #aaa; }
.dn::before { border-bottom: 0; border-top-color: #555; }
.thumb { height: 30px; border: 1px solid #999; border-radius: 6px; background: repeating-linear-gradient(#999 0 1px, transparent 1px 4px) center / 5px 9px no-repeat, linear-gradient(90deg, #fff, #e2e2e0); }
.groove { flex: 1; }
.add { margin-top: 10px; font-weight: 600; line-height: 18px; }
.tags { min-height: 160px; }
</style>
